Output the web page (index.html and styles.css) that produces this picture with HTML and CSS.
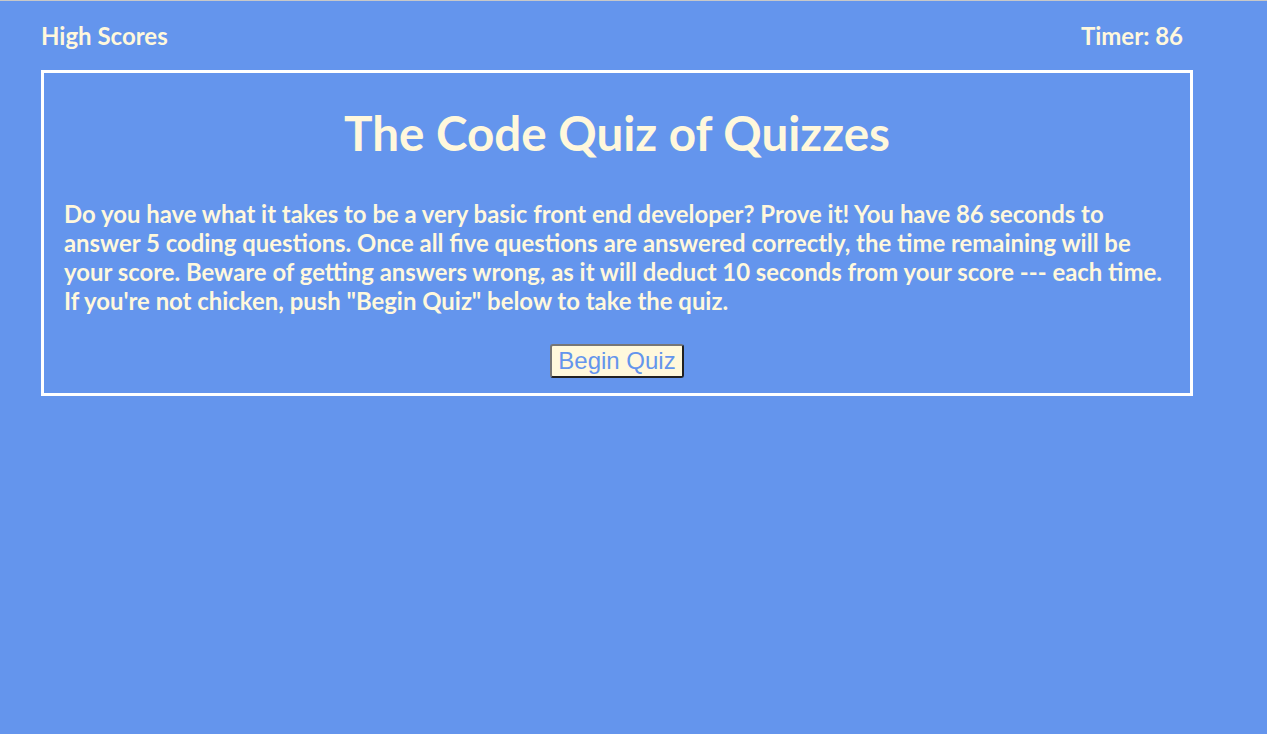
FILE: index.html
```html
<!DOCTYPE html>
<html lang="en">
<head>
<meta charset="utf-8">
<title>The Code Quiz of Quizzes</title>
<link rel="stylesheet" href="styles.css">
</head>
<body>
<header class="top-bar">
  <a class="high-scores">High Scores</a>
  <div class="timer">Timer: <span>86</span></div>
</header>
<main class="quiz-box">
  <h1 class="title">The Code Quiz of Quizzes</h1>
  <p class="intro">Do you have what it takes to be a very basic front end developer? Prove it! You have 86 seconds to answer 5 coding questions. Once all five questions are answered correctly, the time remaining will be your score. Beware of getting answers wrong, as it will deduct 10 seconds from your score --- each time. If you're not chicken, push "Begin Quiz" below to take the quiz.</p>
  <div class="actions"><button class="begin-btn">Begin Quiz</button></div>
</main>
</body>
</html>
```
FILE: styles.css
```css
html, body {
  margin: 0;
  padding: 0;
}
body {
  background: #6495ed;
  border-top: 1px solid #c8c8c8;
  min-height: 733px;
  font-family: Lato, "Open Sans", sans-serif;
  font-weight: 700;
  color: #fff8dc;
}
.top-bar {
  display: flex;
  justify-content: space-between;
  align-items: center;
  width: 1142px;
  margin-left: 41px;
  padding-top: 22px;
  height: 25px;
  font-size: 24px;
  line-height: 25px;
}
.high-scores {
  color: #fff8dc;
}
.quiz-box {
  margin: 22px 0 0 41px;
  width: 1146px;
  border: 3px solid #fff;
  box-sizing: content-box;
  padding: 0 0 15px 0;
}
.title {
  margin: 33px 0 0;
  text-align: center;
  font-size: 47.6px;
  line-height: 54px;
  font-weight: 700;
}
.intro {
  margin: 39px 20px 0 20px;
  font-size: 23.9px;
  line-height: 29px;
}
.actions {
  display: flex;
  justify-content: center;
  margin-top: 29px;
}
.begin-btn {
  font-family: "Liberation Sans", Arial, sans-serif;
  font-weight: 400;
  font-size: 24px;
  line-height: 28px;
  color: #6495ed;
  background: #fff8dc;
  padding: 1px 6px;
  border: 2px outset #767676;
  border-radius: 3px;
}
```
